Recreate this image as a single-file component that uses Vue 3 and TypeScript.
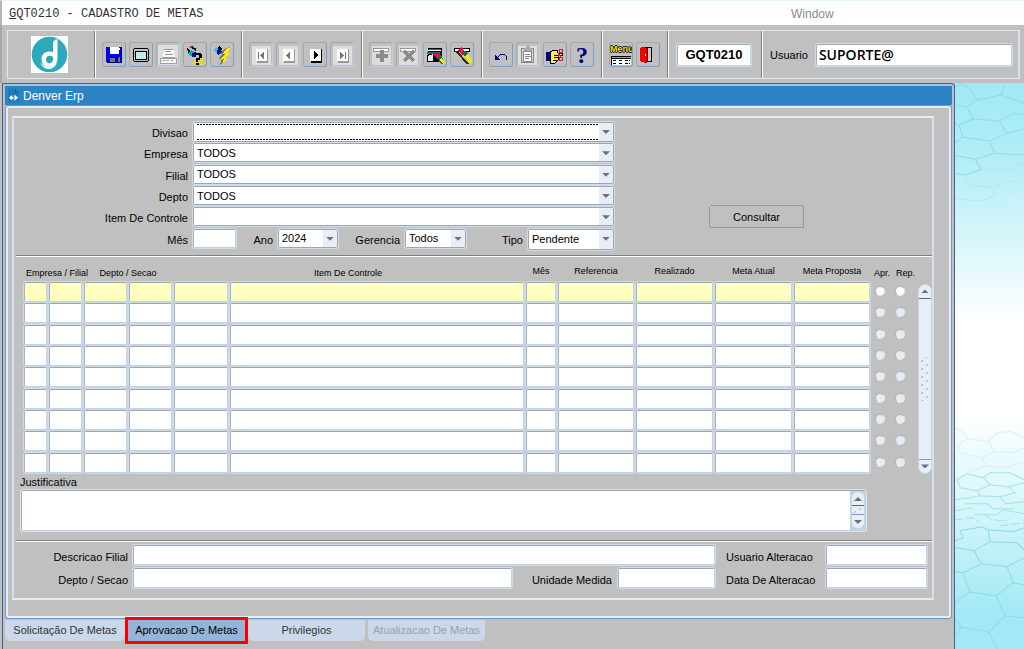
<script setup lang="ts">
import { reactive, ref } from 'vue'

interface Filter {
  id: string
  label: string
  value: string
}

interface Column {
  id: string
  label: string
  span?: number
  low?: boolean
  align?: string
}

const filters = reactive<Filter[]>([
  { id: 'divisao', label: 'Divisao', value: '' },
  { id: 'empresa', label: 'Empresa', value: 'TODOS' },
  { id: 'filial', label: 'Filial', value: 'TODOS' },
  { id: 'depto', label: 'Depto', value: 'TODOS' },
  { id: 'item', label: 'Item De Controle', value: '' },
])

const headers: Column[] = [
  { id: 'empresa', label: 'Empresa / Filial', span: 2, low: true, align: 'start' },
  { id: 'depto', label: 'Depto / Secao', span: 2, low: true, align: 'center' },
  { id: 'codigo', label: '' },
  { id: 'item', label: 'Item De Controle', low: true, align: 'item' },
  { id: 'mes', label: 'Mês' },
  { id: 'referencia', label: 'Referencia' },
  { id: 'realizado', label: 'Realizado' },
  { id: 'atual', label: 'Meta Atual' },
  { id: 'proposta', label: 'Meta Proposta' },
  { id: 'apr', label: 'Apr.', low: true, align: 'start' },
  { id: 'rep', label: 'Rep.', low: true, align: 'rep' },
]

const cells = [
  'Empresa', 'Filial', 'Depto', 'Secao', 'Codigo', 'Item De Controle',
  'Mês', 'Referencia', 'Realizado', 'Meta Atual', 'Meta Proposta',
]

const widths = ['w25', 'w35', 'w45', 'w45', 'w56', 'wauto', 'w32', 'w78', 'w79', 'w79', 'w78', 'w20', 'w20']
const rowCount = 9

const tabs = ['Solicitação De Metas', 'Aprovacao De Metas', 'Privilegios', 'Atualizacao De Metas']
const activeTab = ref(1)
const program = ref('GQT0210')
const user = ref('SUPORTE@')
</script>

<template>
  <div class="erp">
    <header class="menubar">
      <span class="program-title"><u>G</u>QT0210 - CADASTRO DE METAS</span>
      <button class="menu-window" type="button">Window</button>
    </header>

    <div class="toolbar">
      <div class="toolframe">
        <div class="group brand">
          <svg class="logo" viewBox="0 0 37 37" role="img" aria-label="Denver">
            <rect width="37" height="37" fill="#fff" />
            <circle cx="18.500" cy="18.500" r="17.800" fill="#2baabd" />
            <path d="M22 6Q24 3 26.500 3V23H22Z" fill="#fff" />
            <path d="M23 17C17 13.500 10.500 17 10.500 23C10.500 28 14 31 18.500 31C23 31 26.500 28 26.500 23H22C22 29 15 28.500 15 23.500C15 19.500 19 18.500 22 21Z" fill="#fff" />
            <path d="M9 26Q12 34 19 33Q24 32 26 27Q23 30.500 18 30.500Q12 30.500 9 26Z" fill="#fff" />
          </svg>
        </div>

        <div class="group">
          <button class="tool" type="button" aria-label="Salvar">
            <svg viewBox="0 0 24 24" shape-rendering="crispEdges">
              <path d="M4 4H20V20H5L4 19Z" fill="#0000f0" />
              <path d="M19 4h1v16H5v-1h14Z" fill="#000060" />
              <path d="M8 4h9v7H8Z" fill="#fff" /><path d="M17 5h1v2h-1Z" fill="#fff" />
              <path d="M8 14h10v5H8Z" fill="#787878" /><path d="M13 15h3v4h-3Z" fill="#0000d0" /><path d="M8 14h9v1H8Z" fill="#000" />
            </svg>
          </button>
          <button class="tool" type="button" aria-label="Tela">
            <svg viewBox="0 0 24 24" shape-rendering="crispEdges">
              <path d="M5 5h14v1h1v12h-1v1H5v-1H4V6h1Z" fill="#000" />
              <path d="M5 6h14v12H5Z" fill="#c0c0c0" /><path d="M6 8h12v9H6Z" fill="#000" />
              <path d="M7 9h10v7H7Z" fill="#b4e6ea" />
              <path d="M7 9.500H17M7 11.500H17M7 13.500H17M7 15.500H17" stroke="#e8ffff" stroke-dasharray="1 1" />
            </svg>
          </button>
          <button class="tool off" type="button" disabled aria-label="Imprimir">
            <svg viewBox="0 0 24 24" shape-rendering="crispEdges">
              <path d="M2 2h20v20H2Z" fill="#dedede" />
              <path d="M8 6h9l2 8H7Z" fill="#fff" /><path d="M8 6h9M9 8.500h6M9 11.500h8M7 14h12" stroke="#969696" />
              <path d="M4 15h16v5H4Z" fill="#f5f5f5" stroke="#a0a0a0" /><path d="M6 17.500h7M15 17.500h2" stroke="#b0b0b0" />
            </svg>
          </button>
          <button class="tool" type="button" aria-label="Consultar ajuda">
            <svg viewBox="0 0 24 24" shape-rendering="crispEdges">
              <path d="M10 14h11v8H10Z" fill="#c9c38b" />
              <path d="M10 15.500h11M11 17.500h10M10 19.500h11M11 21.500h10" stroke="#ffe838" stroke-dasharray="1 1" />
              <path d="M4 5l4 4-2 3z" fill="#000" /><path d="M5 10l3-3 4 2v4H7Z" fill="#00a8c8" /><path d="M9 10l4-1v5H9Z" fill="#001090" />
              <path d="M7 3h3v2H7Z" fill="#e01020" /><path d="M9 4l4 3" stroke="#000" stroke-width="2" />
              <path d="M12 12V10h6v1h1v4h-2v2h-2v2h-2v-4h3v-3h-3v1Z" fill="#000" /><path d="M13 20h3v2h-3Z" fill="#000" />
            </svg>
          </button>
          <button class="tool" type="button" aria-label="Executar consulta">
            <svg viewBox="0 0 24 24" shape-rendering="crispEdges">
              <path d="M14 6l6-2-3 6h2l-5 6h2l-6 6 2-6H9l3-5H9Z" fill="#777" />
              <path d="M16 6l5-2-3 6h2l-5 6h2l-5 5 2-5h-3l4-5h-2Z" fill="#ffed00" />
              <path d="M4 6l4-2 4 4-3 4-4-3Z" fill="#48bcd2" /><path d="M8 5l4 4-4 3-1-3Z" fill="#001090" /><path d="M9 4l3 3" stroke="#000" stroke-width="2" />
            </svg>
          </button>
        </div>

        <div class="group">
          <button class="tool off" type="button" disabled aria-label="Primeiro">
            <svg viewBox="0 0 24 24" shape-rendering="crispEdges"><path d="M3 3h19v19H3Z" fill="#dfdfdf" /><path d="M18 6v13H8" stroke="#999" fill="none" stroke-width="2" /><path d="M7 6h11v12H7Z" fill="#fff" /><path d="M9 9h1v7H9ZM15 9v7l-4-3.500Z" fill="#777" /></svg>
          </button>
          <button class="tool off" type="button" disabled aria-label="Anterior">
            <svg viewBox="0 0 24 24" shape-rendering="crispEdges"><path d="M3 3h19v19H3Z" fill="#dfdfdf" /><path d="M18 6v13H8" stroke="#999" fill="none" stroke-width="2" /><path d="M7 6h11v12H7Z" fill="#fff" /><path d="M14 9v7l-4-3.500Z" fill="#777" /></svg>
          </button>
          <button class="tool" type="button" aria-label="Proximo">
            <svg viewBox="0 0 24 24" shape-rendering="crispEdges"><path d="M18 6v13H8" stroke="#000" fill="none" stroke-width="2" /><path d="M7 6h11v12H7Z" fill="#fff" /><path d="M11 8v8l5-4Z" fill="#000" /></svg>
          </button>
          <button class="tool off" type="button" disabled aria-label="Ultimo">
            <svg viewBox="0 0 24 24" shape-rendering="crispEdges"><path d="M3 3h19v19H3Z" fill="#dfdfdf" /><path d="M18 6v13H8" stroke="#999" fill="none" stroke-width="2" /><path d="M7 6h11v12H7Z" fill="#fff" /><path d="M10 9v7l4-3.500ZM15 9h1v7h-1Z" fill="#777" /></svg>
          </button>
        </div>

        <div class="group">
          <button class="tool off" type="button" disabled aria-label="Inserir">
            <svg viewBox="0 0 24 24" shape-rendering="crispEdges"><path d="M3 3h19v19H3Z" fill="#dcdcdc" /><path d="M4.500 5.500h15v3h-15Z" fill="#fff" stroke="#999" /><path d="M11 7h4v4h4v4h-4v4h-4v-4H7v-4h4Z" fill="#8c8c8c" /></svg>
          </button>
          <button class="tool off" type="button" disabled aria-label="Excluir">
            <svg viewBox="0 0 24 24" shape-rendering="crispEdges"><path d="M3 3h19v19H3Z" fill="#dcdcdc" /><path d="M4.500 5.500h15v3h-15Z" fill="#fff" stroke="#999" /><path d="M8 8l10 10M18 8L8 18" stroke="#8c8c8c" stroke-width="3" /></svg>
          </button>
          <button class="tool" type="button" aria-label="Limpar tela">
            <svg viewBox="0 0 24 24" shape-rendering="crispEdges">
              <path d="M5 5h14v12H5Z" fill="#000" /><path d="M6 6h12v1H6ZM4 9h13v2H4Z" fill="#087a7a" /><path d="M5 7.500h13" stroke="#fff" /><path d="M4 12h13v7H4Z" fill="#000" /><path d="M5 13l5-2v7H5Z" fill="#e8e8e8" />
              <path d="M11 10l3-1 3 3-1 4-3-1-3-3Z" fill="#f00040" /><path d="M13 12h2v2h-2Z" fill="#a030d0" /><path d="M14 15l4-3 2 4-4 2Z" fill="#008040" /><path d="M16 18l4 3" stroke="#665800" /><path d="M16 17l3-2 3 5-2 1Z" fill="#ffed00" />
            </svg>
          </button>
          <button class="tool" type="button" aria-label="Limpar registro">
            <svg viewBox="0 0 24 24" shape-rendering="crispEdges">
              <path d="M4.500 5.500h15v3h-15Z" fill="#fff" stroke="#000" />
              <path d="M6 8l12 13" stroke="#333000" stroke-width="2" />
              <path d="M8 7l4-3 3 5-3 3Z" fill="#f00040" /><path d="M11 7h2v2h-2Z" fill="#a030d0" /><path d="M12 11l4-3 2 3-3 3Z" fill="#008040" /><path d="M15 13l3-2 4 7-2 3Z" fill="#ffed00" />
            </svg>
          </button>
        </div>

        <div class="group">
          <button class="tool" type="button" aria-label="Desfazer">
            <svg viewBox="0 0 24 24" shape-rendering="crispEdges"><path d="M6 12v5h5Z" fill="#000080" /><path d="M8 15l4-4h3l2 2v4" stroke="#000080" stroke-width="1" fill="none" /></svg>
          </button>
          <button class="tool off" type="button" disabled aria-label="Colar">
            <svg viewBox="0 0 24 24" shape-rendering="crispEdges"><path d="M2 3h19v19H2Z" fill="#dedede" /><path d="M5.500 5.500h12v14h-12Z" fill="#d5d5d5" stroke="#888" /><path d="M7.500 8.500h8v10h-8Z" fill="#fff" stroke="#888" /><path d="M8 5h2V3h4v2h2v3H8Z" fill="#aaa" /><path d="M9 11.500h5M9 13.500h6M9 15.500h4" stroke="#888" /></svg>
          </button>
          <button class="tool" type="button" aria-label="Recortar">
            <svg viewBox="0 0 24 24" shape-rendering="crispEdges">
              <path d="M3 9h4v9H3Z" fill="#000080" /><path d="M7 9l4-2h3l1 3h4v2h-4v5l-3 3H7Z" fill="#ffed66" stroke="#000" /><path d="M11 12h5M11 14h4M10 17h4" stroke="#000" />
              <circle cx="18" cy="8" r="2" stroke="#e01830" fill="none" /><circle cx="18" cy="16" r="2" stroke="#e01830" fill="none" /><path d="M15 14l3-4M15 10l3 4" stroke="#e01830" />
            </svg>
          </button>
          <button class="tool question" type="button" aria-label="Ajuda">?</button>
        </div>

        <div class="group">
          <button class="tool menu-tool" type="button">
            <span class="menu-word">Menu</span>
            <svg viewBox="0 0 20 9" shape-rendering="crispEdges"><path d="M0 0h20v9H0Z" fill="#000" /><path d="M1 1h19v1H1Z" fill="#40c8e0" /><path d="M1 3h19v6H1Z" fill="#fff" /><path d="M2 4.500h4M8 4.500h4M14 4.500h5M2 7.500h4M8 7.500h4M14 7.500h5" stroke="#000" stroke-dasharray="3 1" /></svg>
          </button>
          <button class="tool" type="button" aria-label="Sair">
            <svg viewBox="0 0 24 24" shape-rendering="crispEdges"><path d="M5 4h11v15H5Z" fill="#000" /><path d="M11 5h4v13h-4Z" fill="#c8c8c8" /><path d="M4 5l2-1 5 1v14l-2 1-5-2Z" fill="#f00000" /><path d="M9 11h1v2H9Z" fill="#fff" /><path d="M11 5v14l-2 1" stroke="#600000" fill="none" /></svg>
          </button>
        </div>

        <div class="group code">
          <input v-model="program" class="sunk code-input" aria-label="Programa" />
        </div>
        <div class="group user">
          <label for="usuario">Usuario</label>
          <input id="usuario" v-model="user" class="sunk user-input" />
        </div>
      </div>
    </div>

    <main class="workspace">
      <section class="window">
        <div class="titlebar">
          <svg class="title-icon" viewBox="0 0 12 15"><path d="M0 0H8L12 4V15H0Z" fill="#1b7cc0" /><path d="M8 0V4H12" fill="none" stroke="#105f98" /><path d="M4.500 7L1 10L4.500 13ZM7 6.500L11 10L7 13.500Z" fill="#fff" /><path d="M3 9H6V11H3Z" fill="#fff" /></svg>
          <h1>Denver Erp</h1>
        </div>

        <div class="panel">
          <div class="frame">
            <div class="filters">
              <div class="fields">
                <template v-for="f in filters" :key="f.id">
                  <label :for="f.id">{{ f.label }}</label>
                  <span class="combo" :class="{ focused: f.id === 'divisao' }">
                    <select :id="f.id" v-model="f.value"><option>{{ f.value }}</option></select>
                  </span>
                </template>
                <label for="mes">Mês</label>
                <div class="period">
                  <input id="mes" class="sunk month" />
                  <label class="ano" for="ano">Ano</label>
                  <span class="combo year"><select id="ano"><option>2024</option></select></span>
                  <label class="ger" for="gerencia">Gerencia</label>
                  <span class="combo management"><select id="gerencia"><option>Todos</option></select></span>
                  <label class="tipo" for="tipo">Tipo</label>
                  <span class="combo kind"><select id="tipo"><option>Pendente</option></select></span>
                </div>
              </div>
              <button class="query" type="button">Consultar</button>
            </div>

            <div class="rule"></div>

            <div class="records">
              <div class="grid">
                <table>
                  <colgroup><col v-for="(w, i) in widths" :key="i" :class="w" /></colgroup>
                  <thead>
                    <tr>
                      <th v-for="h in headers" :key="h.id" :colspan="h.span ?? 1" :class="[h.align, { low: h.low }]" scope="col">{{ h.label }}</th>
                    </tr>
                  </thead>
                  <tbody>
                    <tr v-for="r in rowCount" :key="r" :class="{ current: r === 1 }">
                      <td v-for="c in cells" :key="c"><input class="sunk cell" :aria-label="c + ' ' + r" /></td>
                      <td class="pick"><input type="radio" :name="'decisao' + r" :disabled="r > 1" :aria-label="'Aprovar ' + r" /></td>
                      <td class="pick"><input type="radio" :name="'decisao' + r" :disabled="r > 1" :aria-label="'Reprovar ' + r" /></td>
                    </tr>
                  </tbody>
                </table>
              </div>
              <div class="scrollbar">
                <button class="up" type="button" aria-label="Subir"></button>
                <svg class="grip" viewBox="0 0 10 44">
                  <path v-for="n in 6" :key="n" :d="`M1 ${n * 8 - 3}l2 -2M6 ${n * 8 - 7}l2 -2`" stroke="#8ba8c8" />
                </svg>
                <button class="down" type="button" aria-label="Descer"></button>
              </div>
            </div>

            <div class="notes">
              <label for="justificativa">Justificativa</label>
              <div class="notes-box">
                <textarea id="justificativa"></textarea>
                <div class="scrollbar small">
                  <button class="up" type="button" aria-label="Subir texto"></button>
                  <svg class="grip" viewBox="0 0 10 7"><path d="M1 6l2 -2M6 3l2 -2" stroke="#8ba8c8" /></svg>
                  <button class="down" type="button" aria-label="Descer texto"></button>
                </div>
              </div>
            </div>

            <div class="rule"></div>

            <div class="details">
              <label class="right" for="descricao">Descricao Filial</label>
              <input id="descricao" class="sunk detail" />
              <label class="left" for="usuario-alt">Usuario Alteracao</label>
              <input id="usuario-alt" class="sunk detail" />
              <label class="right" for="secao">Depto / Secao</label>
              <div class="unit-row">
                <input id="secao" class="sunk detail" />
                <label for="unidade">Unidade Medida</label>
                <input id="unidade" class="sunk detail unit" />
              </div>
              <label class="left" for="data-alt">Data De Alteracao</label>
              <input id="data-alt" class="sunk detail" />
            </div>
          </div>
        </div>

        <nav class="tabs">
          <button v-for="(t, i) in tabs" :key="t" type="button" :class="{ active: i === activeTab }" :disabled="i === 3" @click="activeTab = i">{{ t }}</button>
        </nav>
      </section>

      <aside class="wallpaper">
        <svg viewBox="0 0 69 565" preserveAspectRatio="xMinYMin slice" fill="none">
          <g stroke="#8fdbe5" stroke-width="1">
            <path d="M0 3L8 1M0 22L12 24L22 17L14 5L8 1M22 17L46 12L49 2M46 12L69 20M12 24L18 36L4 42L0 40M18 36L44 38L58 30L69 32M44 38L52 50L69 46M4 42L8 54L0 60M8 54L34 58L52 50M34 58L40 70L20 76L0 72M40 70L69 72M20 76L26 86L10 92L0 90" />
          </g>
          <g stroke="#b4e8ef" stroke-width="1">
            <path d="M26 86L50 88L62 80L69 82M50 88L54 98L36 104L14 102L10 92M54 98L69 100M36 104L40 113L24 118L0 115" />
          </g>
          <g stroke="#d4f1f6">
            <path d="M40 113L60 115L69 110M60 115L63 124L46 130L28 128L24 118M63 124L69 125M28 128L14 135L0 132M46 130L50 138L69 140" />
            <path d="M0 344L7 348L13 355L2 361M13 355L33 358L42 349L55 348L69 354M33 358L40 368L27 374L5 369L2 361M40 368L58 369L69 364M27 374L30 382L12 390M30 382L50 384L69 378" />
          </g>
          <g stroke="#a5e1eb">
            <path d="M5 403L2 396L12 390L28 394L35 401L22 407L5 404M28 394L35 389L55 389L69 396M35 401L53 403L69 399M53 403L60 409L45 413L25 412L22 407M0 416L15 414L25 412M45 413L50 420L69 418M10 420H32L38 425H60M0 427L18 424M20 431H42L48 426L69 430" />
            <path d="M0 436L18 434L24 438M30 430L36 436L52 437M45 442L69 439" stroke-dasharray="9 2" />
          </g>
          <g stroke="#8cdbe5" stroke-width="1">
            <path d="M0 457L8 454L5 447L27 443L33 446L35 458M33 446L58 448L69 444M0 464L19 467L35 458L62 459L69 466M19 467L26 480L52 483L69 474M0 488L8 489L26 480M8 489L15 508L0 519M15 508L41 512L58 499L52 483M58 499L69 501M41 512L50 532L34 548L6 543L0 534M50 532L69 534M34 548L42 565M6 543L0 553" />
          </g>
        </svg>
      </aside>
    </main>
  </div>
</template>

<style>
body {
  margin: 0;
  background: #c0c0c0;
}
</style>

<style scoped>
* {
  box-sizing: border-box;
}

.erp {
  display: flex;
  flex-direction: column;
  min-height: 100vh;
  font: 11px/14px "Liberation Sans", Arial, sans-serif;
  color: #000;
  background: #c0c0c0;
}

button,
input,
select,
textarea {
  font: inherit;
  color: inherit;
  margin: 0;
  padding: 0;
  outline: none;
}

.menubar {
  display: flex;
  align-items: center;
  height: 25px;
  padding: 2px 0 0 7px;
  background: #fff;
  border-top: 1px solid #e4f6f8;
  border-left: 2px solid #b5b5b5;
}

.program-title {
  flex: 1;
  font: 12px/16px "Liberation Mono", monospace;
  color: #333;
}

.menu-window {
  width: 233px;
  border: 0;
  background: none;
  text-align: left;
  font-size: 12px;
  color: #8a8a8a;
}

.toolbar {
  padding: 5px 4px 4px 5px;
  border-left: 2px solid #a8a8a8;
}

.toolframe {
  display: flex;
  height: 49px;
  border: 1px solid #dfeaf8;
  border-right: 2px solid #d5e2f3;
}

.group {
  display: flex;
  align-items: center;
  gap: 3px;
  padding: 0 7px;
  border-right: 1px solid #808080;
  box-shadow: 1px 0 0 #fff;
}

.brand {
  width: 87px;
  padding-left: 23px;
}

.logo {
  width: 37px;
  height: 37px;
}

.tool {
  width: 24px;
  height: 25px;
  border: 1px solid #a6a6a6;
  border-right-color: #7f9fc0;
  border-bottom-color: #7f9fc0;
  border-radius: 3px;
  background: #c0c0c0;
}

.tool.off {
  border-right-color: #bdd0e6;
  border-bottom-color: #bdd0e6;
}

.tool > svg {
  display: block;
  width: 24px;
  height: 24px;
  margin: -1px;
}

.question {
  font: bold 24px/20px "Liberation Serif", serif;
  color: #000080;
}

.menu-tool {
  overflow: hidden;
}

.menu-word {
  display: block;
  font: bold 9px/11px "Liberation Sans", sans-serif;
  color: #ffed00;
  text-shadow: 1px 0 #000, -1px 0 #000, 0 1px #000, 0 -1px #000;
  text-align: left;
}

.tool.menu-tool > svg {
  width: 20px;
  height: 9px;
  margin: 1px;
}

.sunk {
  min-width: 0;
  background: #fff;
  border: 1px solid #c0d1e6;
  border-top-color: #9ea5ae;
  border-left-color: #a6b2c2;
  border-radius: 2px;
  box-shadow: 0 0 0 1px #cddbea;
}

.code {
  padding: 0 10px 0 9px;
}

.code-input {
  width: 74px;
  height: 22px;
  font-weight: bold;
  font-size: 13px;
  text-align: center;
}

.user {
  flex: 1;
  gap: 8px;
  padding: 0 6px 0 8px;
  border: 0;
  box-shadow: none;
}

.user-input {
  flex: 1;
  height: 22px;
  padding-left: 2px;
  font: 600 14px/18px "Open Sans", sans-serif;
}

.workspace {
  display: flex;
  flex: 1;
  padding-left: 2px;
}

.window {
  flex: 1;
  min-width: 0;
  padding: 0 2px;
  border: 1px solid #3f6196;
  border-bottom: 0;
  border-top-right-radius: 4px;
  background: #c0c0c0;
}

.titlebar {
  display: flex;
  align-items: center;
  gap: 4px;
  height: 21px;
  padding-left: 3px;
  border-top: 2px solid #a5c3df;
  background: #2d84c5;
}

.title-icon {
  width: 11px;
  height: 15px;
}

h1 {
  margin: 0;
  font-size: 12px;
  font-weight: normal;
  color: #fff;
}

.panel {
  padding: 10px 17px 18px 6px;
  border: 1px solid #7394bd;
  border-radius: 3px;
  box-shadow: inset 0 0 0 2px #e6edf6;
  background: #c0c0c0;
}

.frame {
  border: 2px solid;
  border-color: #e3ecf7;
  border-left-color: #d3e0f0;
  border-right-color: #d3e0f0;
}

.filters {
  display: flex;
  align-items: flex-end;
  height: 137px;
  padding: 0 0 5px;
}

.fields {
  display: grid;
  grid-template-columns: 174px minmax(0, 421px);
  grid-template-rows: repeat(6, 1fr);
  column-gap: 5px;
  height: 128px;
}

.fields > label {
  padding-top: 4px;
  text-align: right;
}

.combo {
  position: relative;
  display: block;
  height: 19px;
  border: 1px solid #a0a6b0;
  border-radius: 2px;
  box-shadow: 0 0 0 1px #cddbea;
  background: #fff;
}

.combo select {
  display: block;
  appearance: none;
  width: 100%;
  height: 100%;
  padding: 0 0 0 3px;
  border: 0;
  border-right: 14px solid #e8eef5;
  border-radius: 0;
  background: #fff;
}

.combo.focused {
  height: 20px;
}

.combo.focused select {
  background:
    repeating-linear-gradient(90deg, #000 0 2px, #fff 2px 3px) 3px 1px / 100% 1px no-repeat,
    repeating-linear-gradient(90deg, #000 0 2px, #fff 2px 3px) 3px 16px / 100% 1px no-repeat,
    #fff;
}

.combo::after {
  content: "";
  position: absolute;
  top: 7px;
  right: 3px;
  width: 8px;
  height: 4px;
  clip-path: polygon(0 0, 100% 0, 50% 100%);
  background: #6c7085;
  pointer-events: none;
}

.period {
  display: flex;
}

.period label {
  padding: 4px 5px 0 0;
  text-align: right;
}

.month {
  width: 43px;
  height: 19px;
}

.ano {
  width: 42px;
}

.year {
  width: 60px;
}

.ger {
  width: 67px;
}

.management {
  width: 61px;
}

.tipo {
  width: 62px;
}

.kind {
  flex: 1;
  height: 21px;
}

.query {
  width: 95px;
  height: 23px;
  margin: 0 0 22px 95px;
  border: 1px solid #e6edf5;
  border-right-color: #858585;
  border-bottom-color: #858585;
  outline: 1px solid #8d9bab;
  outline-offset: -1px;
  border-radius: 2px;
  background: #c0c0c0;
}

.rule {
  height: 2px;
  margin-left: 2px;
  border-top: 1px solid #808080;
  background: #fff;
}

.records {
  display: flex;
  align-items: flex-end;
  gap: 6px;
  padding-left: 10px;
}

.grid {
  flex: 1;
  min-width: 0;
}

table {
  width: 100%;
  table-layout: fixed;
  border-collapse: collapse;
}

thead tr {
  height: 25px;
}

th {
  padding: 0 2px 5px 0;
  vertical-align: bottom;
  font-size: 9px;
  line-height: 11px;
  font-weight: normal;
  white-space: nowrap;
}

th.low {
  padding-bottom: 3px;
}

th.start {
  padding-left: 2px;
  text-align: left;
}

th.item {
  padding-right: 60px;
}

th.rep {
  padding-left: 4px;
  text-align: left;
}

tbody tr {
  height: calc(192px / 9);
}

td {
  padding: 0 2px 0 0;
  vertical-align: top;
}

.cell {
  display: block;
  width: 100%;
  height: 20px;
}

.current .cell {
  background: #ffffc0;
}

.w20 { width: 20px; }
.w25 { width: 25px; }
.w32 { width: 32px; }
.w35 { width: 35px; }
.w45 { width: 45px; }
.w56 { width: 56px; }
.w78 { width: 78px; }
.w79 { width: 79px; }

td.pick {
  padding: 4px 4px 0 3px;
}

.pick input {
  display: block;
  appearance: none;
  width: 10px;
  height: 10px;
  border: 1px solid #a9b2bd;
  border-right-color: #e3eaf3;
  border-bottom-color: #e3eaf3;
  border-radius: 50%;
  background: #fff;
}

.pick input:disabled {
  background: #e6ecf3;
}

.scrollbar {
  display: flex;
  flex-direction: column;
  justify-content: space-between;
  align-items: center;
  width: 14px;
  height: 190px;
  border: 1px solid #c6d6e8;
  border-radius: 7px;
  background: #e8eef6;
}

.scrollbar button {
  display: flex;
  align-items: center;
  justify-content: center;
  width: 100%;
  height: 14px;
  border: 0;
  background: none;
}

.scrollbar .up {
  border-bottom: 1px solid #5f6680;
}

.scrollbar .down {
  border-top: 1px solid #7d9cc0;
}

.scrollbar button::after {
  content: "";
  width: 8px;
  height: 4px;
  background: #6c7085;
  clip-path: polygon(50% 0, 100% 100%, 0 100%);
}

.scrollbar .down::after {
  clip-path: polygon(0 0, 100% 0, 50% 100%);
}

.grip {
  width: 10px;
  fill: none;
}

.notes {
  display: flex;
  flex-direction: column;
  padding: 1px 66px 9px 6px;
}

.notes-box {
  display: flex;
  align-items: center;
  height: 41px;
  margin: 1px 0 0 1px;
  border: 1px solid #c0d1e6;
  border-top-color: #9ea5ae;
  border-left-color: #a6b2c2;
  border-radius: 2px;
  box-shadow: 0 0 0 1px #dbe6f2;
  background: #c2d3e8;
}

textarea {
  flex: 1;
  height: 100%;
  margin-right: 1px;
  border: 0;
  resize: none;
  background: #fff;
}

.scrollbar.small {
  height: 38px;
}

.details {
  display: grid;
  grid-template-columns: 114px minmax(0, 1fr) 101px 101px;
  column-gap: 5px;
  row-gap: 3px;
  align-items: center;
  padding: 3px 5px 10px 0;
}

.detail {
  width: 100%;
  height: 20px;
}

.details label {
  padding-top: 4px;
}

.right {
  text-align: right;
}

.left {
  padding-left: 6px;
}

.unit-row {
  display: flex;
  align-items: center;
}

.unit-row label {
  flex: none;
  padding: 4px 6px 0 20px;
}

.unit {
  flex: none;
  width: 97px;
}

.tabs {
  display: flex;
  gap: 3px;
  padding: 1px 0 7px;
}

.tabs button {
  width: 117px;
  height: 21px;
  border: 0;
  border-radius: 0 0 5px 5px;
  background: #cbd8e9;
  color: #333;
}

.tabs button:first-child {
  width: 120px;
}

.tabs .active {
  position: relative;
  background: #92b5d8;
  color: #000;
  outline: 3px solid #f00;
  border-radius: 0;
}

.tabs button:disabled {
  color: #9a9fa8;
}

.wallpaper {
  position: relative;
  width: 69px;
  background: linear-gradient(#9fe9f5 0, #b4eef7 80px, #fff 240px, #fff 330px, #d2f6fa 430px, #a2e9f5 530px);
}

.wallpaper svg {
  position: absolute;
  width: 100%;
  height: 100%;
}
</style>
